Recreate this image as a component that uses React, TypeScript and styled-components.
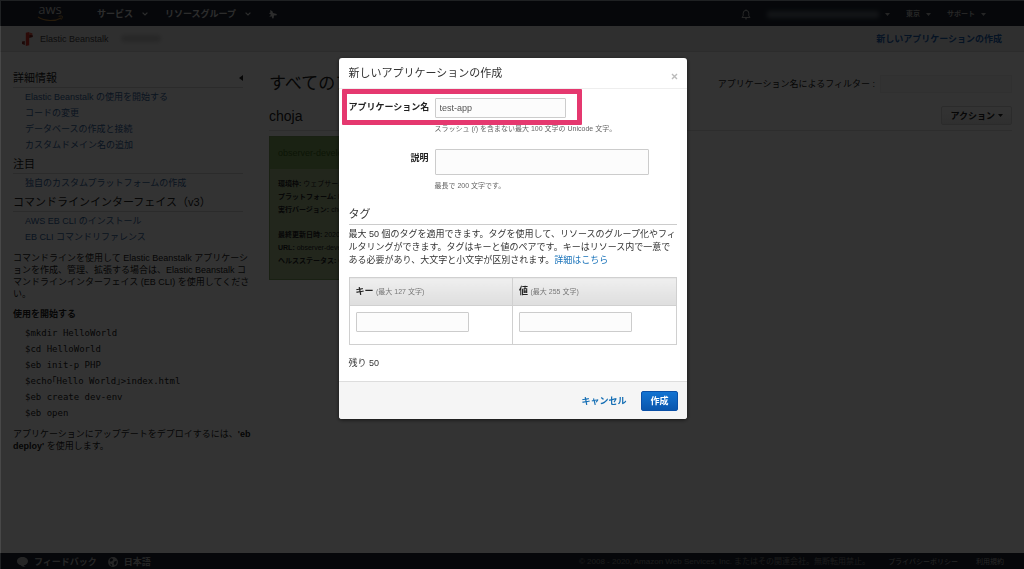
import React from "react";
import styled, { createGlobalStyle } from "styled-components";

const Global = createGlobalStyle`
  * { box-sizing: border-box; }
  html, body { margin: 0; padding: 0; }
  body {
    background: #fff;
    color: #222;
    font-family: "Liberation Sans", "Noto Sans CJK JP", sans-serif;
    font-size: 9px;
    line-height: 12px;
  }
  h1, h2, h3, p, ul, ol { margin: 0; padding: 0; font-weight: 400; }
  ul, ol { list-style: none; }
  a { text-decoration: none; color: inherit; }
  button, input, textarea { font: inherit; }
`;

const Page = styled.div`
  min-height: 100vh;
  display: flex;
  flex-direction: column;
`;

const TopBar = styled.header`
  display: flex;
  align-items: center;
  justify-content: space-between;
  height: 26px;
  padding: 2px 38px 0 37px;
  background: #1f2735;
  color: #fff;
`;

const NavGroup = styled.nav<{ $gap: number }>`
  display: flex;
  align-items: center;
  gap: ${(p) => p.$gap}px;
`;

const Logo = styled.a`
  width: 28px;
  margin-right: 15px;
  svg { display: block; }
`;

const NavButton = styled.button<{ $small?: boolean }>`
  display: flex;
  align-items: center;
  gap: ${(p) => (p.$small ? 6 : 9)}px;
  padding: 0;
  border: 0;
  background: none;
  color: ${(p) => (p.$small ? "#bbb" : "#ddd")};
  font-size: ${(p) => (p.$small ? 7 : 9)}px;
  font-weight: 700;
  line-height: 14px;
`;

const Redacted = styled.span<{ $width: number; $dark?: boolean }>`
  width: ${(p) => p.$width}px;
  height: 7px;
  border-radius: 3px;
  background: ${(p) => (p.$dark ? "#5f6873" : "#c2c2c2")};
  filter: blur(2px);
`;

const ServiceBar = styled.div`
  display: flex;
  align-items: center;
  justify-content: space-between;
  height: 26px;
  padding: 0 22px;
  background: #ececec;
  border-bottom: 1px solid #dcdcdc;
`;

const ServiceName = styled.div`
  display: flex;
  align-items: center;
  gap: 7px;
  color: #444;
  ${Redacted} { margin-left: 5px; }
`;

const CreateLink = styled.a`
  color: #1a5fb0;
  font-weight: 700;
`;

const Body = styled.div`
  flex: 1;
  display: flex;
  gap: 26px;
  padding: 19px 12px 0 13px;
`;

const Sidebar = styled.aside`
  flex: none;
  width: 230px;
  line-height: 12px;
  white-space: nowrap;
`;

const SideHeading = styled.h2`
  display: flex;
  justify-content: space-between;
  align-items: center;
  padding-bottom: 2px;
  border-bottom: 1px solid #d8d8d8;
  font-size: 11px;
  line-height: 14px;
  ul + & { margin-top: 4px; }
`;

const SideList = styled.ul`
  padding: 1px 0 0 12px;
  line-height: 16px;
  color: #34649c;
`;

const SideText = styled.p`
  margin-top: 7px;
`;

const StepHeading = styled.h3`
  margin-top: 7px;
  font-size: 9px;
  font-weight: 700;
  line-height: 14px;
`;

const CodeList = styled.ol`
  padding: 4px 0 0 12px;
  font-family: "DejaVu Sans Mono", "Noto Sans CJK JP", monospace;
  line-height: 16px;
`;

const Main = styled.main`
  flex: 1;
  min-width: 0;
`;

const MainRow = styled.div`
  display: flex;
  align-items: center;
  justify-content: space-between;
`;

const PageTitle = styled.h1`
  font-size: 17px;
  line-height: 26px;
`;

const Filter = styled.label`
  display: flex;
  align-items: center;
  gap: 5px;
  input {
    width: 132px;
    height: 18px;
    border: 1px solid #f0f0f0;
    background: #f9f9f9;
  }
`;

const AppRow = styled(MainRow)`
  height: 34px;
  padding-top: 4px;
  border-bottom: 1px solid #dedede;
`;

const AppName = styled.h2`
  font-size: 14px;
  line-height: 18px;
`;

const ActionButton = styled.button`
  display: flex;
  align-items: center;
  gap: 3px;
  height: 19px;
  padding: 0 8px;
  border: 1px solid #d4d4d4;
  border-radius: 2px;
  background: linear-gradient(#fff, #ebebeb);
  color: #222;
  font-weight: 700;
`;

const EnvCard = styled.section`
  width: 224px;
  height: 144px;
  margin-top: 5px;
  border: 1px solid #7d9f60;
  background: #a8bd8e;
  font-size: 7px;
`;

const EnvTitle = styled.h3`
  padding: 0 8px;
  background: #82a860;
  color: #3c6a1c;
  font-size: 9px;
  line-height: 32px;
`;

const EnvDetails = styled.ul`
  padding: 8px 8px 0;
  line-height: 13px;
  white-space: nowrap;
`;

const EnvUpdated = styled.li`
  padding-top: 12px;
`;

const Footer = styled.footer`
  display: flex;
  align-items: center;
  justify-content: space-between;
  height: 16px;
  padding: 2px 20px 0 17px;
  background: #1f2735;
  color: #bbb;
`;

const FooterGroup = styled.div<{ $legal?: boolean }>`
  display: flex;
  align-items: center;
  gap: ${(p) => (p.$legal ? 18 : 11)}px;
  font-size: ${(p) => (p.$legal ? 7 : 9)}px;
  font-weight: ${(p) => (p.$legal ? 400 : 700)};
  button {
    display: flex;
    align-items: center;
    gap: 6px;
    padding: 0;
    border: 0;
    background: none;
    color: inherit;
  }
  small { font-size: 8px; color: #888; }
`;

const Overlay = styled.div`
  position: fixed;
  inset: 0;
  display: flex;
  justify-content: center;
  align-items: flex-start;
  padding-top: 57px;
  border: 1px solid rgba(255, 255, 255, 0.1);
  border-width: 1px 0 0 1px;
  background: rgba(0, 0, 0, 0.8);
`;

const Dialog = styled.div`
  width: 348px;
  border-radius: 3px;
  background: #fff;
  color: #333;
  overflow: hidden;
  box-shadow: 0 1px 4px rgba(0, 0, 0, 0.6);
`;

const DialogHeader = styled.div`
  display: flex;
  justify-content: space-between;
  height: 31px;
  padding: 6px 9px 0 10px;
  border-bottom: 1px solid #eee;
`;

const DialogTitle = styled.h2`
  font-size: 11px;
  line-height: 18px;
`;

const CloseButton = styled.button`
  height: 24px;
  padding: 0;
  border: 0;
  background: none;
  color: #bbb;
  svg { display: block; }
`;

const DialogBody = styled.form`
  padding: 9px 10px 0;
`;

const Field = styled.div`
  position: relative;
  display: grid;
  grid-template-columns: 80px 1fr;
  column-gap: 6px;
  align-items: start;
`;

const FieldLabel = styled.label`
  padding-top: 3px;
  color: #222;
  font-weight: 700;
  line-height: 13px;
  text-align: right;
  white-space: nowrap;
`;

const TextInput = styled.input<{ $width: number }>`
  display: block;
  width: ${(p) => p.$width}px;
  height: 20px;
  padding: 0 4px;
  border: 1px solid #ccc;
  border-radius: 1px;
  background: #fcfcfc;
  color: #555;
`;

const TextArea = styled.textarea`
  display: block;
  width: 214px;
  height: 26px;
  padding: 2px 4px;
  border: 1px solid #ccc;
  border-radius: 1px;
  background: #fcfcfc;
  resize: none;
`;

const Hint = styled.p`
  grid-column: 2;
  padding: 5px 0 14px;
  color: #666;
  font-size: 7px;
`;

const Highlight = styled.span`
  position: absolute;
  top: -9px;
  left: -7px;
  width: 240px;
  height: 36px;
  border: 5px solid #e5386f;
  border-radius: 1px;
  pointer-events: none;
`;

const TagHeading = styled.h3`
  padding-bottom: 2px;
  border-bottom: 1px solid #ccc;
  font-size: 11px;
  line-height: 16px;
`;

const TagText = styled.p`
  padding: 3px 0 10px;
  line-height: 13px;
  a { color: #1a73ba; }
`;

const TagTable = styled.table`
  width: 100%;
  border-collapse: collapse;
  table-layout: fixed;
  th, td {
    border: 1px solid #d0d0d0;
    padding: 0 6px;
    text-align: left;
  }
  th {
    height: 28px;
    background: linear-gradient(#efefef, #dedede);
    color: #222;
  }
  th small { color: #777; font-size: 7px; font-weight: 400; }
  td { height: 39px; padding-top: 6px; vertical-align: top; }
`;

const Remaining = styled.p`
  padding: 12px 0;
`;

const DialogFooter = styled.div`
  display: flex;
  align-items: center;
  justify-content: flex-end;
  gap: 15px;
  height: 38px;
  padding: 0 9px;
  border-top: 1px solid #ddd;
  background: #f5f5f5;
`;

const FooterButton = styled.button<{ $primary?: boolean }>`
  height: 20px;
  padding: 0 ${(p) => (p.$primary ? 8 : 0)}px;
  border: ${(p) => (p.$primary ? "1px solid #0a50a8" : "0")};
  border-radius: 2px;
  background: ${(p) => (p.$primary ? "linear-gradient(#1273d2, #0a56ad)" : "none")};
  color: ${(p) => (p.$primary ? "#fff" : "#146eb4")};
  font-weight: 700;
`;

const Chevron = () => (
  <svg width="6" height="4" viewBox="0 0 6 4" fill="none" stroke="currentColor" strokeWidth="1.2">
    <path d="M.6 .6 3 3 5.4 .6" />
  </svg>
);

const Caret = () => (
  <svg width="5" height="3" viewBox="0 0 5 3" fill="currentColor">
    <path d="M0 0h5L2.5 3z" />
  </svg>
);

const AwsLogo = () => (
  <svg width="28" height="24" viewBox="0 0 28 24">
    <text x="13" y="12" textAnchor="middle" fontFamily="Open Sans, sans-serif" fontSize="13" fill="#ccc">aws</text>
    <path d="M1 15C8 19.500 18 19.500 24 15.900" fill="none" stroke="#c98a3a" strokeWidth="1.2" />
    <path d="M21.600 14.300c2-.5 3.600-.4 3.800 0s-.3 2.200-1.400 3.400" fill="none" stroke="#c98a3a" strokeWidth="1" />
  </svg>
);

const PinIcon = () => (
  <svg width="9" height="9" viewBox="0 0 9 9" fill="#ddd">
    <path d="M2.200 0 4.400 1.200 5 3 8.600 4 8.800 5.200 6 5.600 5.600 8.200 4.400 8.600 3.600 6.200 1.200 7 3 4.800 1 3.200 2.400 2.600z" />
  </svg>
);

const BellIcon = () => (
  <svg width="10" height="11" viewBox="0 0 10 11" fill="none" stroke="#bbb" strokeWidth="1">
    <path d="M1 8.500h8L7.800 6.800V4.200a2.800 2.800 0 0 0-5.600 0v2.600zM5 1.400V.4M4 9.800h2" />
  </svg>
);

const BeanstalkIcon = () => (
  <svg width="11" height="14" viewBox="0 0 11 14">
    <path d="M3.800.8 7.200 0v13.200L3.800 14z" fill="#d9342b" />
    <path d="M7.200 2.500 10.800 3.200V5L7.200 6z" fill="#7d1d18" />
    <path d="M0 9.500 2.800 9v4L0 12z" fill="#8a2f28" />
    <path d="M7.200 .6 10.400 1.200v2L7.200 3z" fill="#e25444" />
  </svg>
);

const BubbleIcon = () => (
  <svg width="11" height="10" viewBox="0 0 11 10" fill="currentColor">
    <path d="M5.500 0C8.600 0 11 1.900 11 4.200S8.900 8 6.600 8.300C7 9 8 9.500 8.800 9.800 6.400 10 4.700 9.200 3.900 8.200 1.600 7.800 0 6.200 0 4.200 0 1.900 2.400 0 5.500 0z" />
  </svg>
);

const GlobeIcon = () => (
  <svg width="10" height="10" viewBox="0 0 10 10">
    <circle cx="5" cy="5" r="4.900" fill="currentColor" />
    <path d="M3 1.200 5.200 2 4.500 4 2.400 4.800 1.600 3zM6.200 4.400 8.800 3.800 8.400 6.800 6.800 8.400 5.600 6.400zM2 6.400 4 7.200 4.200 9 2.800 8.400z" fill="#1f2735" />
  </svg>
);

const guideLinks = ["Elastic Beanstalk の使用を開始する", "コードの変更", "データベースの作成と接続", "カスタムドメイン名の追加"];
const featuredLinks = ["独自のカスタムプラットフォームの作成"];
const cliLinks = ["AWS EB CLI のインストール", "EB CLI コマンドリファレンス"];
const commands = ["$mkdir HelloWorld", "$cd HelloWorld", "$eb init-p PHP", "$echo｢Hello World｣>index.html", "$eb create dev-env", "$eb open"];

const Links = ({ items }: { items: string[] }) => (
  <SideList>
    {items.map((t) => (
      <li key={t}><a href="#">{t}</a></li>
    ))}
  </SideList>
);

const CreateDialog = () => (
  <Overlay>
    <Dialog role="dialog" aria-modal="true" aria-labelledby="dialog-title">
      <DialogHeader>
        <DialogTitle id="dialog-title">新しいアプリケーションの作成</DialogTitle>
        <CloseButton aria-label="閉じる">
          <svg width="7" height="7" viewBox="0 0 7 7" stroke="currentColor" strokeWidth="1.4">
            <path d="M1 1 6 6M6 1 1 6" />
          </svg>
        </CloseButton>
      </DialogHeader>
      <DialogBody id="create-form" onSubmit={(e) => e.preventDefault()}>
        <Field>
          <FieldLabel htmlFor="app-name">アプリケーション名</FieldLabel>
          <TextInput id="app-name" $width={131} defaultValue="test-app" />
          <Highlight />
          <Hint>スラッシュ (/) を含まない最大 100 文字の Unicode 文字。</Hint>
        </Field>
        <Field>
          <FieldLabel htmlFor="app-desc">説明</FieldLabel>
          <TextArea id="app-desc" />
          <Hint>最長で 200 文字です。</Hint>
        </Field>
        <TagHeading>タグ</TagHeading>
        <TagText>
          最大 50 個のタグを適用できます。タグを使用して、リソースのグループ化やフィルタリングができます。タグはキーと値のペアです。キーはリソース内で一意である必要があり、大文字と小文字が区別されます。<a href="#">詳細はこちら</a>
        </TagText>
        <TagTable>
          <thead>
            <tr>
              <th scope="col">キー <small>(最大 127 文字)</small></th>
              <th scope="col">値 <small>(最大 255 文字)</small></th>
            </tr>
          </thead>
          <tbody>
            <tr>
              <td><TextInput $width={113} aria-label="キー" /></td>
              <td><TextInput $width={113} aria-label="値" /></td>
            </tr>
          </tbody>
        </TagTable>
        <Remaining>残り 50</Remaining>
      </DialogBody>
      <DialogFooter>
        <FooterButton type="button">キャンセル</FooterButton>
        <FooterButton $primary type="submit" form="create-form">作成</FooterButton>
      </DialogFooter>
    </Dialog>
  </Overlay>
);

export default function App() {
  return (
    <>
      <Global />
      <Page>
        <TopBar>
          <NavGroup $gap={17}>
            <Logo href="#" aria-label="aws"><AwsLogo /></Logo>
            <NavButton>サービス <Chevron /></NavButton>
            <NavButton>リソースグループ <Chevron /></NavButton>
            <NavButton aria-label="ピン"><PinIcon /></NavButton>
          </NavGroup>
          <NavGroup $gap={16}>
            <NavButton aria-label="通知"><BellIcon /></NavButton>
            <NavButton $small aria-label="アカウント"><Redacted $width={112} $dark /><Caret /></NavButton>
            <NavButton $small>東京 <Caret /></NavButton>
            <NavButton $small>サポート <Caret /></NavButton>
          </NavGroup>
        </TopBar>
        <ServiceBar>
          <ServiceName><BeanstalkIcon />Elastic Beanstalk<Redacted $width={40} /></ServiceName>
          <CreateLink href="#">新しいアプリケーションの作成</CreateLink>
        </ServiceBar>
        <Body>
          <Sidebar>
            <SideHeading>
              詳細情報
              <svg width="4" height="6" viewBox="0 0 4 6"><path d="M4 0v6L0 3z" fill="#222" /></svg>
            </SideHeading>
            <Links items={guideLinks} />
            <SideHeading>注目</SideHeading>
            <Links items={featuredLinks} />
            <SideHeading>コマンドラインインターフェイス（v3）</SideHeading>
            <Links items={cliLinks} />
            <SideText>
              コマンドラインを使用して Elastic Beanstalk アプリケーシ<br />
              ョンを作成、管理、拡張する場合は、Elastic Beanstalk コ<br />
              マンドラインインターフェイス (EB CLI) を使用してくださ<br />
              い。
            </SideText>
            <StepHeading>使用を開始する</StepHeading>
            <CodeList>
              {commands.map((c) => <li key={c}>{c}</li>)}
            </CodeList>
            <SideText>
              アプリケーションにアップデートをデプロイするには、<b>'eb<br />
              deploy'</b> を使用します。
            </SideText>
          </Sidebar>
          <Main>
            <MainRow>
              <PageTitle>すべてのアプリケーション</PageTitle>
              <Filter>アプリケーション名によるフィルター : <input /></Filter>
            </MainRow>
            <AppRow>
              <AppName>choja</AppName>
              <ActionButton>アクション <Caret /></ActionButton>
            </AppRow>
            <EnvCard>
              <EnvTitle>observer-develop</EnvTitle>
              <EnvDetails>
                <li><b>環境枠:</b> ウェブサーバー</li>
                <li><b>プラットフォーム:</b> PHP</li>
                <li><b>実行バージョン:</b> choja</li>
                <EnvUpdated><b>最終更新日時:</b> 2020</EnvUpdated>
                <li><b>URL:</b> observer-develop</li>
                <li><b>ヘルスステータス:</b> Ok</li>
              </EnvDetails>
            </EnvCard>
          </Main>
        </Body>
        <Footer>
          <FooterGroup>
            <button><BubbleIcon />フィードバック</button>
            <button><GlobeIcon />日本語</button>
          </FooterGroup>
          <FooterGroup $legal>
            <small>© 2008 - 2020, Amazon Web Services, Inc. またはその関連会社。無断転用禁止。</small>
            <a href="#">プライバシーポリシー</a>
            <a href="#">利用規約</a>
          </FooterGroup>
        </Footer>
      </Page>
      <CreateDialog />
    </>
  );
}
